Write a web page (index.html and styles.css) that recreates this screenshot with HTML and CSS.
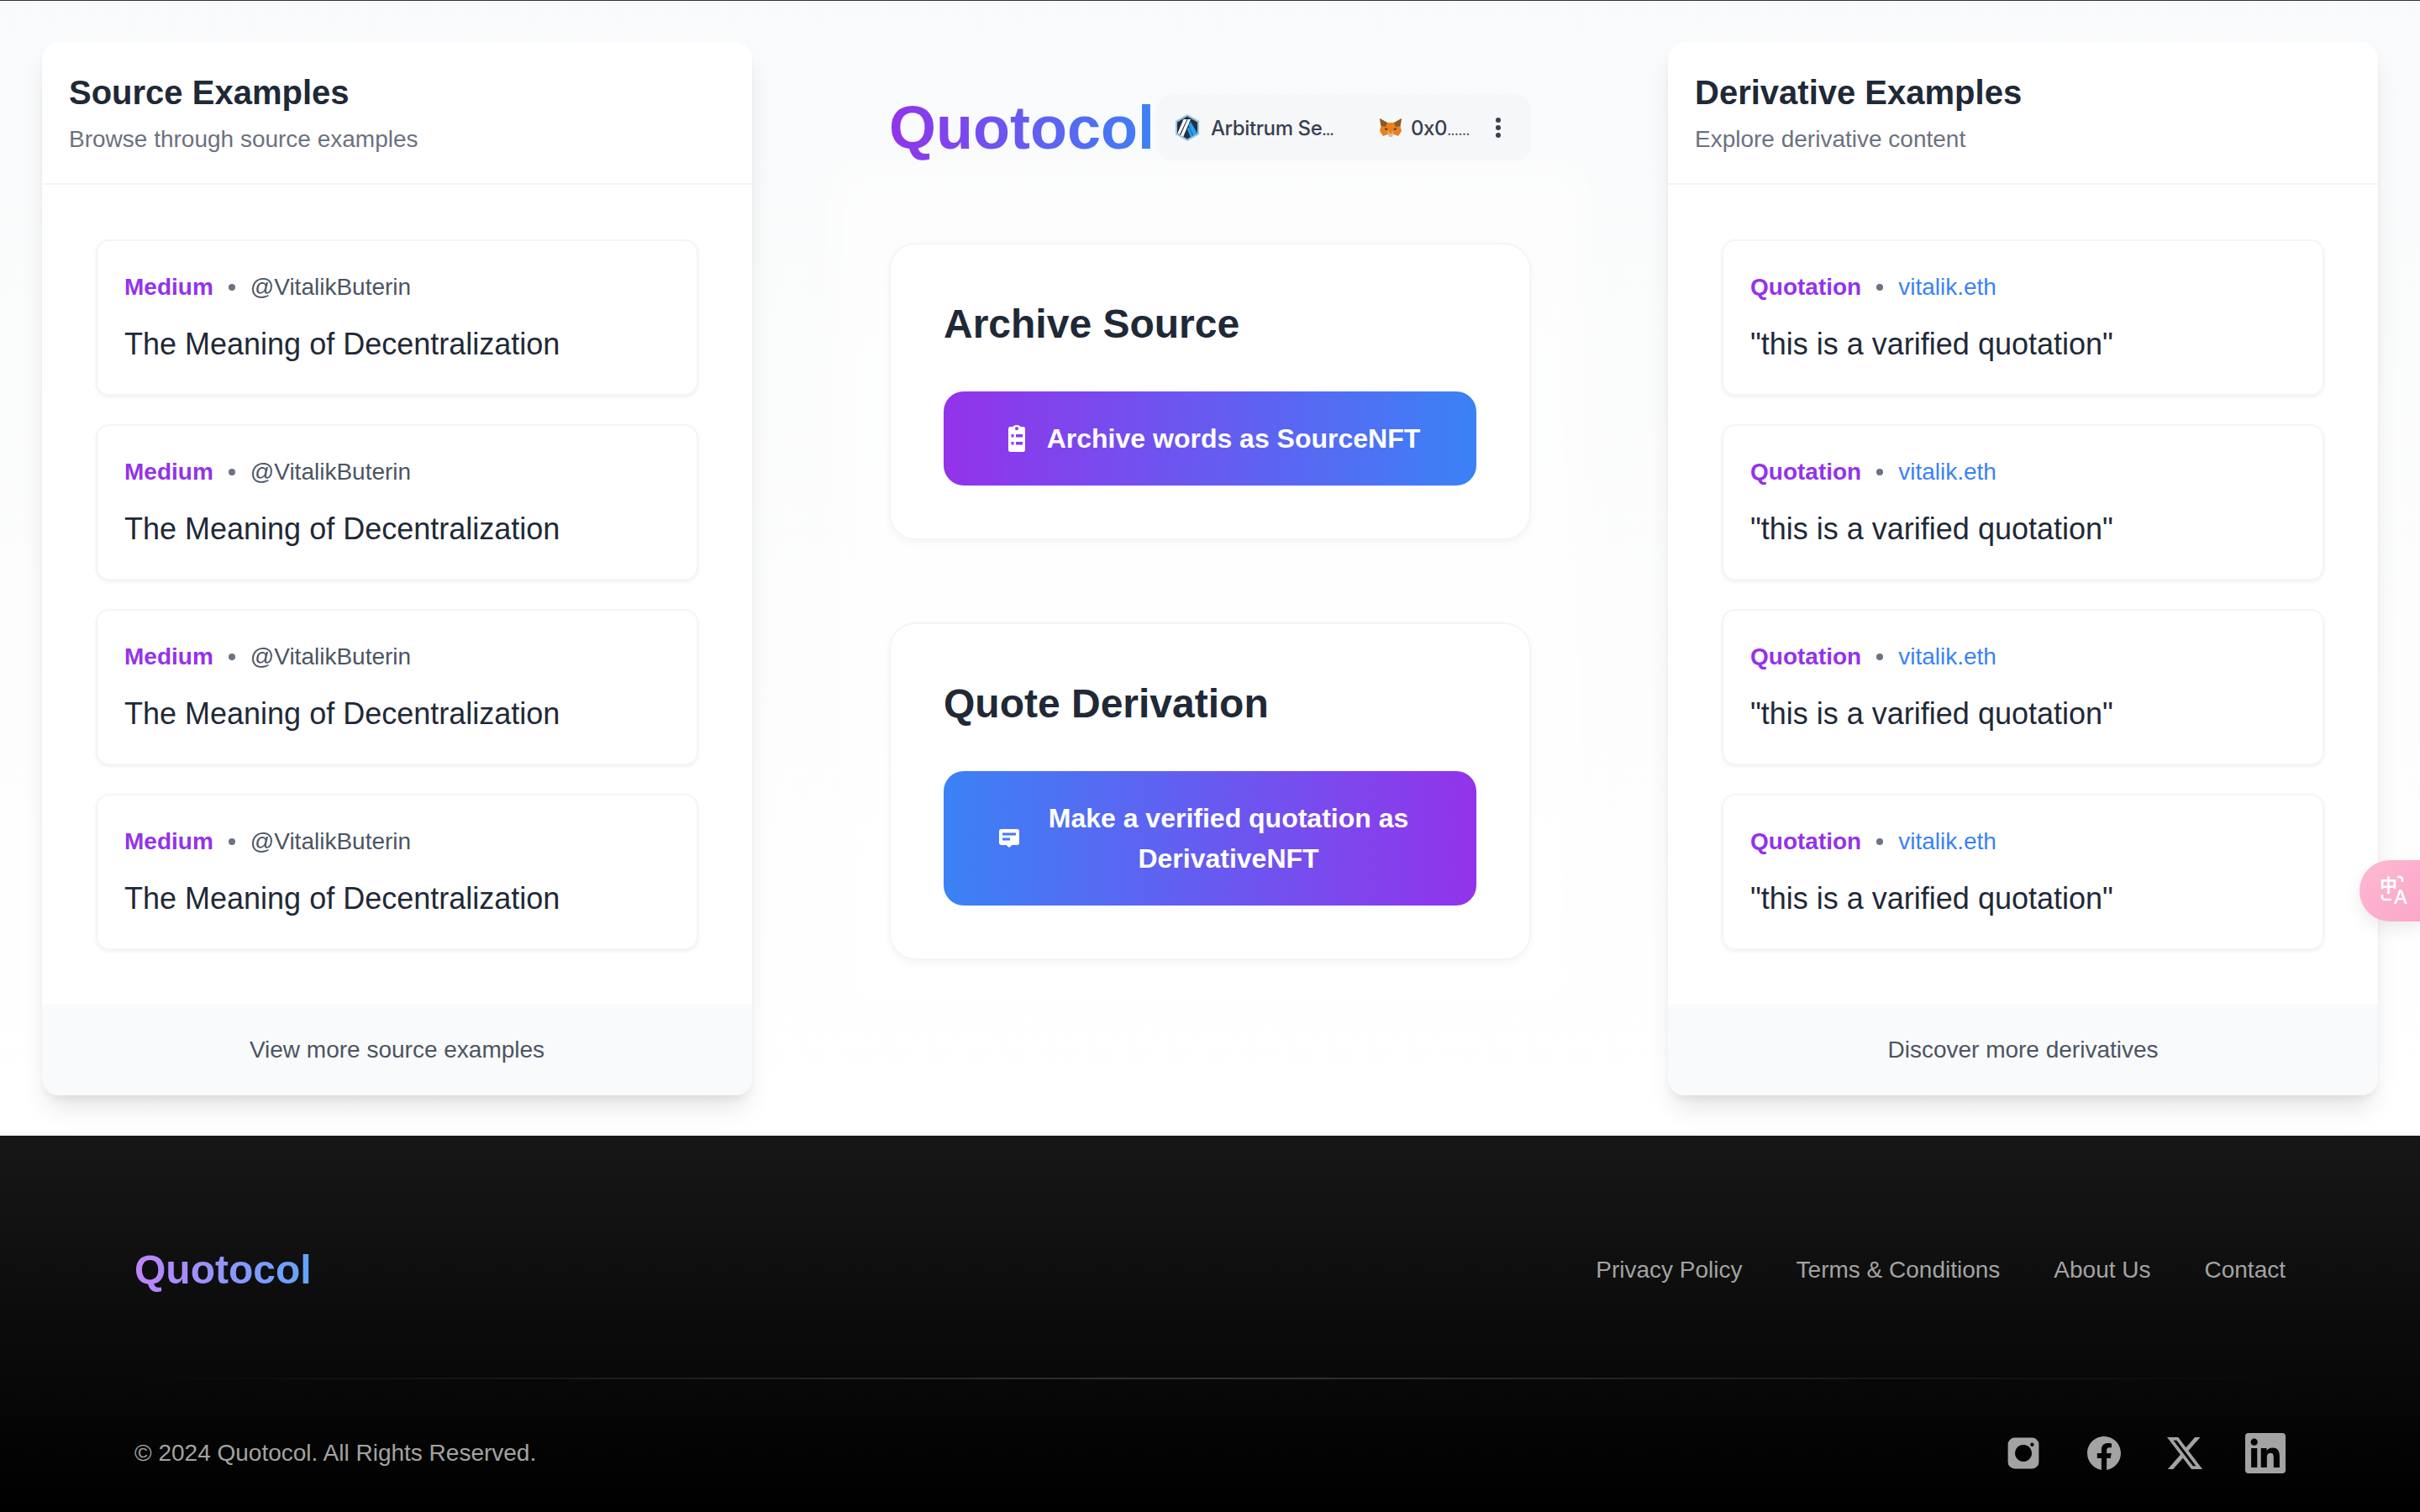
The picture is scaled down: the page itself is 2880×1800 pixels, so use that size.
FILE: index.html
```html
<!DOCTYPE html>
<html lang="en">
<head>
<meta charset="utf-8">
<title>Quotocol</title>
<link rel="stylesheet" href="styles.css">
</head>
<body>
<main class="main">
  <section class="panel">
    <header class="panel-head"><h2>Source Examples</h2><p>Browse through source examples</p></header>
    <div class="list">
      <article class="item"><div class="meta"><b>Medium</b><i></i><span>@VitalikButerin</span></div><h3>The Meaning of Decentralization</h3></article>
      <article class="item"><div class="meta"><b>Medium</b><i></i><span>@VitalikButerin</span></div><h3>The Meaning of Decentralization</h3></article>
      <article class="item"><div class="meta"><b>Medium</b><i></i><span>@VitalikButerin</span></div><h3>The Meaning of Decentralization</h3></article>
      <article class="item"><div class="meta"><b>Medium</b><i></i><span>@VitalikButerin</span></div><h3>The Meaning of Decentralization</h3></article>
    </div>
    <footer class="panel-foot">View more source examples</footer>
  </section>

  <section class="center">
    <div class="top-row">
      <h1 class="logo">Quotocol</h1>
      <div class="wallet">
        <svg class="arb" viewBox="0 0 28 32"><polygon points="14,0 28,8 28,24 14,32 0,24 0,8" fill="#9dc3dc"/><polygon points="14,2.500 26,9.400 26,22.600 14,29.500 2,22.600 2,9.400" fill="#213147"/><polygon points="15.500,13 18,9 26,22.600 21,25.500" fill="#28a0f0"/><polygon points="14,18 16,15 20.500,26 18,27.500" fill="#28a0f0"/><polygon points="9.500,6 13.500,6 5,24 2.500,22.600" fill="#fff"/><polygon points="14.500,6 18,6 9,27 6,25" fill="#fff"/></svg>
        <span class="w-net">Arbitrum Se<small>...</small></span>
        <svg class="fox" viewBox="0 0 26 22"><polygon points="0,0 9,5 17,5 26,0 24.500,9 26,15 22,21 17,19 9,19 4,21 0,15 1.500,9" fill="#e8821e"/><polygon points="0,0 9,5 7,10 1.500,9" fill="#8a5a2b"/><polygon points="26,0 17,5 19,10 24.500,9" fill="#8a5a2b"/><polygon points="9,14 13,19 17,14 15,20 11,20" fill="#f6c08a"/><polygon points="10,19 16,19 15,22 11,22" fill="#c8bdb4"/><polygon points="6,11 10,13 7,14" fill="#33281f"/><polygon points="20,11 16,13 19,14" fill="#33281f"/></svg>
        <span class="w-addr">0x0<small>......</small></span>
        <svg class="dots" viewBox="0 0 8 26"><circle cx="4" cy="4" r="3"/><circle cx="4" cy="13" r="3"/><circle cx="4" cy="22" r="3"/></svg>
      </div>
    </div>
    <div class="action">
      <h2>Archive Source</h2>
      <a class="btn btn-source">
        <svg class="btn-ico" viewBox="0 0 32 32"><path fill-rule="evenodd" d="M6 4.500C6 3 7 2 8.500 2H11.500C12 .8 13.800 0 16 0s4 .8 4.500 2H23.500C25 2 26 3 26 4.500V29.500C26 31 25 32 23.500 32H8.500C7 32 6 31 6 29.500ZM16 2.200a2 2 0 1 0 .01 0ZM9.500 11v3.500h3V11ZM15 11v3.500h8V11ZM9.500 20v3.500h3V20ZM15 20v3.500h8V20Z" fill="#fff"/></svg>
        <span>Archive words as SourceNFT</span>
      </a>
    </div>
    <div class="action">
      <h2>Quote Derivation</h2>
      <a class="btn btn-derive">
        <svg class="btn-ico" viewBox="0 0 32 32"><path fill-rule="evenodd" d="M6.500 5H25.500C27 5 28 6 28 7.500V21.500C28 23 27 24 25.500 24H19.500L16 27L12.500 24H6.500C5 24 4 23 4 21.500V7.500C4 6 5 5 6.500 5ZM8 9.500V12.500H24V9.500ZM8 15.500V18.500H17V15.500Z" fill="#fff"/></svg>
        <span>Make a verified quotation as DerivativeNFT</span>
      </a>
    </div>
  </section>

  <section class="panel">
    <header class="panel-head"><h2>Derivative Examples</h2><p>Explore derivative content</p></header>
    <div class="list">
      <article class="item"><div class="meta"><b>Quotation</b><i></i><span class="link">vitalik.eth</span></div><h3>"this is a varified quotation"</h3></article>
      <article class="item"><div class="meta"><b>Quotation</b><i></i><span class="link">vitalik.eth</span></div><h3>"this is a varified quotation"</h3></article>
      <article class="item"><div class="meta"><b>Quotation</b><i></i><span class="link">vitalik.eth</span></div><h3>"this is a varified quotation"</h3></article>
      <article class="item"><div class="meta"><b>Quotation</b><i></i><span class="link">vitalik.eth</span></div><h3>"this is a varified quotation"</h3></article>
    </div>
    <footer class="panel-foot">Discover more derivatives</footer>
  </section>
</main>

<footer class="site-foot">
  <div class="foot-top">
    <div class="foot-logo">Quotocol</div>
    <nav class="foot-nav"><a>Privacy Policy</a><a>Terms &amp; Conditions</a><a>About Us</a><a>Contact</a></nav>
  </div>
  <div class="foot-rule"></div>
  <div class="foot-bottom">
    <p>© 2024 Quotocol. All Rights Reserved.</p>
    <div class="social">
      <svg viewBox="0 0 24 24"><path fill-rule="evenodd" d="M6.800 2.800H17.200A4 4 0 0 1 21.200 6.800V17.200A4 4 0 0 1 17.200 21.200H6.800A4 4 0 0 1 2.800 17.200V6.800A4 4 0 0 1 6.800 2.800ZM12 7a5 5 0 1 0 .01 0ZM17.200 5.800a1.100 1.100 0 1 0 .01 0Z"/></svg>
      <svg viewBox="-2.400 -2.400 28.800 28.800"><path d="M24 12.073c0-6.627-5.373-12-12-12s-12 5.373-12 12c0 5.990 4.388 10.954 10.125 11.854v-8.385H7.078v-3.470h3.047V9.430c0-3.007 1.792-4.669 4.533-4.669 1.312 0 2.686.235 2.686.235v2.953H15.830c-1.491 0-1.956.925-1.956 1.874v2.250h3.328l-.532 3.470h-2.796v8.385C19.612 23.027 24 18.062 24 12.073z"/></svg>
      <svg viewBox="-1.700 -1.700 27.400 27.400"><path d="M18.901 1.153h3.680l-8.040 9.190L24 22.846h-7.406l-5.800-7.584-6.638 7.584H.474l8.600-9.830L0 1.154h7.594l5.243 6.932ZM17.610 20.644h2.039L6.486 3.240H4.298Z"/></svg>
      <svg viewBox="0 0 24 24"><path d="M20.447 20.452h-3.554v-5.569c0-1.328-.027-3.037-1.852-3.037-1.853 0-2.136 1.445-2.136 2.939v5.667H9.351V9h3.414v1.561h.046c.477-.9 1.637-1.850 3.370-1.850 3.601 0 4.267 2.370 4.267 5.455v6.286zM5.337 7.433c-1.144 0-2.063-.926-2.063-2.065 0-1.138.92-2.063 2.063-2.063 1.140 0 2.064.925 2.064 2.063 0 1.139-.925 2.065-2.064 2.065zm1.782 13.019H3.555V9h3.564v11.452zM22.225 0H1.771C.792 0 0 .774 0 1.729v20.542C0 23.227.792 24 1.771 24h20.451C23.200 24 24 23.227 24 22.271V1.729C24 .774 23.200 0 22.222 0h.003z"/></svg>
    </div>
  </div>
</footer>

<div class="translate">
  <svg viewBox="0 0 40 36"><text x="0" y="19" class="t-zh">中</text><text x="17" y="34" class="t-en">A</text><path d="M21 2h3a3 3 0 0 1 3 3v3M3 23v3a3 3 0 0 0 3 3h8" fill="none" stroke="#fff" stroke-width="2.600"/></svg>
</div>
</body>
</html>
```

FILE: styles.css
```css
* { box-sizing: border-box; }
html, body { margin: 0; height: 100%; }
body {
  width: 2880px;
  height: 1800px;
  overflow: hidden;
  position: relative;
  font-family: "Liberation Sans", Arial, sans-serif;
  border-top: 1px solid #30343a;
}
h1, h2, h3, p { margin: 0; }

.main {
  height: 1351px;
  padding: 49px 50px 0;
  display: flex;
  justify-content: space-between;
  align-items: flex-start;
  background: linear-gradient(180deg, #f9fafb 0%, #ffffff 100%);
}

.panel {
  width: 845px;
  height: 1254px;
  background: #fff;
  border-radius: 20px;
  overflow: hidden;
  display: flex;
  flex-direction: column;
  box-shadow: 0 20px 30px -6px rgba(0,0,0,.1), 0 8px 12px -4px rgba(0,0,0,.06), 0 0 2px rgba(0,0,0,.04);
}
.panel-head {
  height: 170px;
  padding: 32px 32px 0;
  border-bottom: 2px solid #f3f4f6;
}
.panel-head h2 { font-size: 40px; line-height: 56px; font-weight: 700; color: #1f2937; }
.panel-head p { margin-top: 8px; font-size: 28px; line-height: 40px; color: #6b7280; }

.list {
  flex: 1;
  padding: 65px 64px 0;
  display: flex;
  flex-direction: column;
  gap: 34px;
}
.item {
  height: 186px;
  padding: 35px 32px 0;
  border: 2px solid #f4f5f6;
  border-radius: 16px;
  background: #fff;
  box-shadow: 0 2px 4px rgba(0,0,0,.06);
}
.meta { display: flex; align-items: center; height: 40px; font-size: 28px; color: #4b5563; }
.meta b { color: #9333ea; font-weight: 700; }
.meta i { width: 8px; height: 8px; border-radius: 50%; background: #6b7280; margin: 0 18px; }
.meta .link { color: #3b82f6; }
.item h3 { margin-top: 20px; font-size: 36px; line-height: 56px; font-weight: 400; color: #1f2937; }

.panel-foot {
  height: 108px;
  background: #f9fafb;
  font-size: 28px;
  line-height: 108px;
  text-align: center;
  color: #4b5563;
}

.center {
  width: 764px;
  margin-top: 63px;
  display: flex;
  flex-direction: column;
  gap: 98px;
  position: relative;
}
.center::before {
  content: "";
  position: absolute;
  inset: 86px -64px -70px;
  background: rgba(255,255,255,.55);
  filter: blur(20px);
}
.center > * { position: relative; }
.top-row { display: flex; align-items: center; justify-content: space-between; height: 78px; }
.logo {
  font-size: 72px;
  line-height: 78px;
  font-weight: 700;
  background: linear-gradient(90deg, #9333ea, #3b82f6);
  -webkit-background-clip: text;
  background-clip: text;
  color: transparent;
}
.wallet {
  width: 446px;
  height: 78px;
  display: flex;
  align-items: center;
  padding-left: 23px;
  background: #f6f7f9;
  border-radius: 18px;
  font-family: Inter, sans-serif;
  font-size: 24px;
  letter-spacing: -.4px;
  font-weight: 500;
  color: #374151;
}
.wallet small { font-size: 18px; letter-spacing: -1px; }
.arb { width: 28px; height: 32px; flex: none; }
.w-net { margin-left: 14px; width: 201px; white-space: nowrap; }
.fox { width: 26px; height: 22px; flex: none; }
.w-addr { margin-left: 11px; width: 100px; white-space: nowrap; }
.w-addr small { font-size: 16px; letter-spacing: -.4px; }
.dots { width: 8px; height: 26px; fill: #374151; flex: none; }

.action {
  padding: 63px 63px 63px;
  background: #fff;
  border: 2px solid #f4f5f6;
  border-radius: 32px;
  box-shadow: 0 4px 8px rgba(0,0,0,.04);
}
.action h2 { font-size: 48px; line-height: 64px; font-weight: 700; color: #1f2937; margin-bottom: 48px; }
.btn {
  display: flex;
  align-items: center;
  justify-content: center;
  padding: 32px 64px;
  border-radius: 24px;
  font-size: 32px;
  line-height: 48px;
  font-weight: 700;
  text-align: center;
  color: #fff;
}
.btn-source { gap: 20px; padding-left: 68px; background: linear-gradient(90deg, #9333ea, #3b82f6); }
.btn-derive { gap: 16px; padding: 32px 66px 32px 62px; background: linear-gradient(90deg, #3b82f6, #9333ea); }
.btn-ico { width: 32px; height: 32px; flex: none; }

.site-foot {
  height: 448px;
  padding: 0 160px;
  background: linear-gradient(180deg, #171717 0%, #000000 100%);
}
.foot-top { height: 288px; padding-top: 132px; display: flex; justify-content: space-between; }
.foot-logo {
  font-size: 48px;
  line-height: 56px;
  height: 56px;
  font-weight: 700;
  background: linear-gradient(90deg, #c084fc, #60a5fa);
  -webkit-background-clip: text;
  background-clip: text;
  color: transparent;
}
.foot-nav { display: flex; gap: 64px; height: 56px; align-items: center; font-size: 28px; color: #a3a3a3; }
.foot-rule { height: 2px; background: linear-gradient(90deg, transparent, #333 50%, transparent); }
.foot-bottom { display: flex; justify-content: space-between; align-items: center; height: 176px; padding-bottom: 1px; font-size: 28px; color: #a3a3a3; }
.social { display: flex; gap: 48px; }
.social svg { width: 48px; height: 48px; fill: #a3a3a3; display: block; }

.translate {
  position: absolute;
  right: 0;
  top: 1023px;
  width: 72px;
  height: 73px;
  padding: 18px 0 0 24px;
  border-radius: 36px 0 0 36px;
  background: linear-gradient(135deg, #ffb8d2, #f9a8c9);
  box-shadow: 0 8px 20px rgba(0,0,0,.08);
}
.translate svg { width: 40px; height: 36px; display: block; overflow: visible; }
.t-zh { font-family: "Noto Sans CJK SC", sans-serif; font-size: 21px; font-weight: 700; fill: #fff; }
.t-en { font-family: "Noto Sans", sans-serif; font-size: 24px; font-weight: 500; fill: #fff; }
```
